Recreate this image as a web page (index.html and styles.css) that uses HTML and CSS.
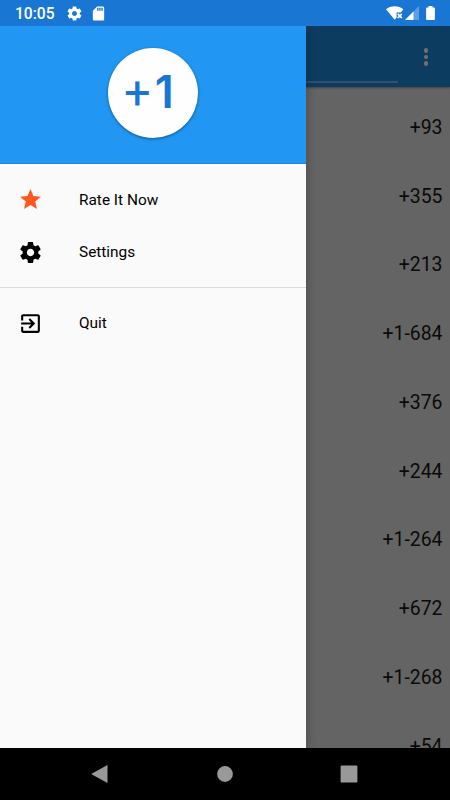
FILE: index.html
```html
<!DOCTYPE html>
<html lang="en">
<head>
    <meta charset="UTF-8">
    <meta name="viewport" content="width=device-width, initial-scale=1.0">
    <title>Country Codes</title>
    <link rel="stylesheet" href="styles.css">
</head>
<body>
    <div class="screen">
        <!-- Status bar -->
        <header class="status-bar">
            <span class="clock">10:05</span>
            <svg class="status-gear" viewBox="0 0 24 24"><path d="M19.43 12.98c.04-.32.07-.64.07-.98s-.03-.66-.07-.98l2.11-1.65c.19-.15.24-.42.12-.64l-2-3.46c-.12-.22-.39-.3-.61-.22l-2.49 1c-.52-.4-1.08-.73-1.69-.98l-.38-2.65C14.46 2.18 14.25 2 14 2h-4c-.25 0-.46.18-.49.42l-.38 2.65c-.61.25-1.17.59-1.69.98l-2.49-1c-.23-.09-.49 0-.61.22l-2 3.46c-.13.22-.07.49.12.64l2.11 1.65c-.04.32-.07.65-.07.98s.03.66.07.98l-2.11 1.65c-.19.15-.24.42-.12.64l2 3.46c.12.22.39.3.61.22l2.49-1c.52.4 1.08.73 1.69.98l.38 2.65c.03.24.24.42.49.42h4c.25 0 .46-.18.49-.42l.38-2.65c.61-.25 1.17-.59 1.69-.98l2.49 1c.23.09.49 0 .61-.22l2-3.46c.12-.22.07-.49-.12-.64l-2.11-1.65zM12 15.5c-1.93 0-3.5-1.57-3.5-3.5s1.57-3.5 3.5-3.5 3.5 1.57 3.5 3.5-1.57 3.5-3.5 3.5z"/></svg>
            <svg class="status-sd" viewBox="0 0 24 24"><path d="M18 2h-8L4.02 8 4 20c0 1.1.9 2 2 2h12c1.1 0 2-.9 2-2V4c0-1.1-.9-2-2-2zm-6 6h-2V4h2v4zm3 0h-2V4h2v4zm3 0h-2V4h2v4z"/></svg>
            <div class="status-right">
                <svg class="status-wifi" viewBox="0 0 18 15"><path d="M0 3.200C4.500-.9 13-.9 17.300 3.200L14.800 6.600H10.600V11.400L8.700 13.800Z"/><path d="M11.800 7.800l4 4.200M15.800 7.800l-4 4.200" fill="none" stroke="#fff" stroke-width="1.700"/></svg>
                <svg class="status-signal" viewBox="0 0 14 14"><path d="M14 0v14H0z" opacity=".3"/><path d="M8.500 5.500V14H0z"/></svg>
                <svg class="status-battery" viewBox="0 0 9 14"><path d="M2.500 0h4v1.500H8q.9 0 .9.900v10.700q0 .9-.9.900H1q-.9 0-.9-.9V2.400q0-.9.900-.9h1.500z"/></svg>
            </div>
        </header>

        <div class="content">
            <!-- Drawer -->
            <nav class="drawer">
                <div class="drawer-header">
                    <div class="logo"><span class="logo-plus">+</span><span class="logo-one">1</span></div>
                </div>
                <ul class="menu">
                    <li>
                        <svg viewBox="0 0 24 24"><path fill="#ff5722" d="M12 17.270L18.180 21l-1.640-7.030L22 9.240l-7.190-.61L12 2 9.190 8.630 2 9.240l5.460 4.730L5.820 21z"/></svg>
                        <span>Rate It Now</span>
                    </li>
                    <li>
                        <svg viewBox="0 0 24 24"><path d="M19.430 12.980c.04-.32.07-.64.07-.98s-.03-.66-.07-.98l2.110-1.650c.19-.15.24-.42.12-.64l-2-3.460c-.12-.22-.39-.3-.61-.22l-2.490 1c-.52-.4-1.080-.73-1.690-.98l-.38-2.650C14.460 2.180 14.250 2 14 2h-4c-.25 0-.46.18-.49.42l-.38 2.650c-.61.25-1.170.59-1.690.98l-2.490-1c-.23-.09-.49 0-.61.22l-2 3.460c-.13.22-.07.49.12.64l2.110 1.650c-.04.32-.07.65-.07.98s.03.66.07.98l-2.110 1.650c-.19.15-.24.42-.12.64l2 3.460c.12.22.39.3.61.22l2.490-1c.52.4 1.080.73 1.690.98l.38 2.650c.03.24.24.42.49.42h4c.25 0 .46-.18.49-.42l.38-2.650c.61-.25 1.170-.59 1.690-.98l2.490 1c.23.09.49 0 .61-.22l2-3.460c.12-.22.07-.49-.12-.64l-2.110-1.650zM12 15.500c-1.930 0-3.500-1.570-3.500-3.500s1.570-3.500 3.500-3.500 3.500 1.570 3.500 3.500-1.570 3.500-3.500 3.500z"/></svg>
                        <span>Settings</span>
                    </li>
                </ul>
                <ul class="menu menu-bottom">
                    <li>
                        <svg viewBox="0 0 24 24"><path d="M10.090 15.590L11.500 17l5-5-5-5-1.410 1.410L12.670 11H3v2h9.670l-2.580 2.590zM19 3H5c-1.110 0-2 .9-2 2v4h2V5h14v14H5v-4H3v4c0 1.100.89 2 2 2h14c1.100 0 2-.9 2-2V5c0-1.100-.9-2-2-2z"/></svg>
                        <span>Quit</span>
                    </li>
                </ul>
            </nav>

            <!-- Page dimmed behind the drawer -->
            <main class="page">
                <div class="toolbar">
                    <div class="search-line"></div>
                    <div class="more"><i></i><i></i><i></i></div>
                </div>
                <ul class="codes">
                    <li>+93</li>
                    <li>+355</li>
                    <li>+213</li>
                    <li>+1-684</li>
                    <li>+376</li>
                    <li>+244</li>
                    <li>+1-264</li>
                    <li>+672</li>
                    <li>+1-268</li>
                    <li>+54</li>
                </ul>
            </main>
        </div>

        <!-- Navigation bar -->
        <footer class="nav-bar">
            <svg viewBox="0 0 18 18"><path d="M16.500.5v17q0 .5-.5.300L1 9.500q-.6-.5 0-1L16 .2q.5-.2.5.3z"/></svg>
            <svg viewBox="0 0 18 18"><circle cx="9" cy="9" r="7.900"/></svg>
            <svg viewBox="0 0 18 18"><rect x=".6" y=".6" width="16.800" height="16.800" rx="1.200"/></svg>
        </footer>
    </div>
</body>
</html>
```

FILE: styles.css
```css
* {
    box-sizing: border-box;
}
body {
    margin: 0;
    font-family: Roboto, "Liberation Sans", sans-serif;
}
ul {
    list-style: none;
    margin: 0;
    padding: 0;
}
svg {
    display: block;
    flex: none;
}
.screen {
    display: flex;
    flex-direction: column;
    width: 450px;
    height: 800px;
    overflow: hidden;
}

/* status bar */
.status-bar {
    display: flex;
    align-items: center;
    flex: none;
    height: 26px;
    padding: 0 15px;
    background: #1976d2;
    color: #fff;
}
.status-bar svg {
    fill: #fff;
}
.clock {
    width: 51px;
    font-size: 15.6px;
    font-weight: 500;
    line-height: 26px;
    padding-top: 2px;
}
.status-gear {
    width: 17px;
    height: 17px;
}
.status-sd {
    width: 17px;
    height: 17px;
    margin-left: 7px;
}
.status-right {
    display: flex;
    align-items: center;
    margin-left: auto;
}
.status-wifi {
    width: 18px;
    height: 15px;
}
.status-signal {
    width: 14px;
    height: 14px;
    margin-left: 1px;
}
.status-battery {
    width: 9px;
    height: 14px;
    margin-left: 7px;
}

.content {
    display: flex;
    flex: 1;
    min-height: 0;
    overflow: hidden;
}

/* drawer */
.drawer {
    position: relative;
    z-index: 1;
    width: 306px;
    flex: none;
    background: #fafafa;
    box-shadow: 0 0 10px rgba(0, 0, 0, 0.3);
}
.drawer-header {
    height: 138px;
    padding-top: 22px;
    background: #2196f3;
    border-bottom: 1px solid #1b87e5;
}
.logo {
    display: flex;
    gap: 4px;
    width: 90px;
    height: 90px;
    margin: 0 auto;
    padding-left: 16px;
    border-radius: 50%;
    background: #fefefe;
    box-shadow: 0 1px 3px rgba(0, 0, 0, 0.45);
    color: #1976d2;
    line-height: 88px;
}
.logo-plus {
    font-size: 47px;
    font-weight: 400;
    line-height: 90px;
}
.logo-one {
    font-family: Inter, sans-serif;
    font-size: 45px;
    font-weight: 600;
}
.menu {
    padding: 9.5px 0 8.5px;
}
.menu li {
    display: flex;
    align-items: center;
    gap: 36px;
    height: 52.5px;
    padding-left: 18px;
    font-size: 15.4px;
    color: #000;
}
.menu svg {
    width: 25px;
    height: 25px;
}
.menu-bottom {
    border-top: 1px solid #dadada;
    padding-top: 9px;
}

/* dimmed page */
.page {
    flex: 1;
    background: #646464;
}
.toolbar {
    display: flex;
    height: 61px;
    background: #0d3c61;
    box-shadow: 0 1px 2px rgba(0, 0, 0, 0.35);
}
.search-line {
    width: 91.5px;
    height: 57px;
    border-bottom: 2px solid #324f6b;
}
.more {
    display: flex;
    flex-direction: column;
    align-items: center;
    gap: 2px;
    margin-left: 26px;
    padding-top: 22px;
}
.more i {
    width: 4.5px;
    height: 4.5px;
    border-radius: 50%;
    background: #707070;
}
.codes {
    padding-top: 5.8px;
}
.codes li {
    height: 68.75px;
    padding-right: 7.5px;
    line-height: 69px;
    text-align: right;
    font-size: 19.4px;
    color: #0a0a0a;
}

/* navigation bar */
.nav-bar {
    position: relative;
    z-index: 2;
    display: flex;
    align-items: center;
    justify-content: center;
    gap: 106.5px;
    flex: none;
    height: 52px;
    padding-right: 1px;
    background: #000;
}
.nav-bar svg {
    width: 18px;
    height: 18px;
    fill: #999;
}
```
